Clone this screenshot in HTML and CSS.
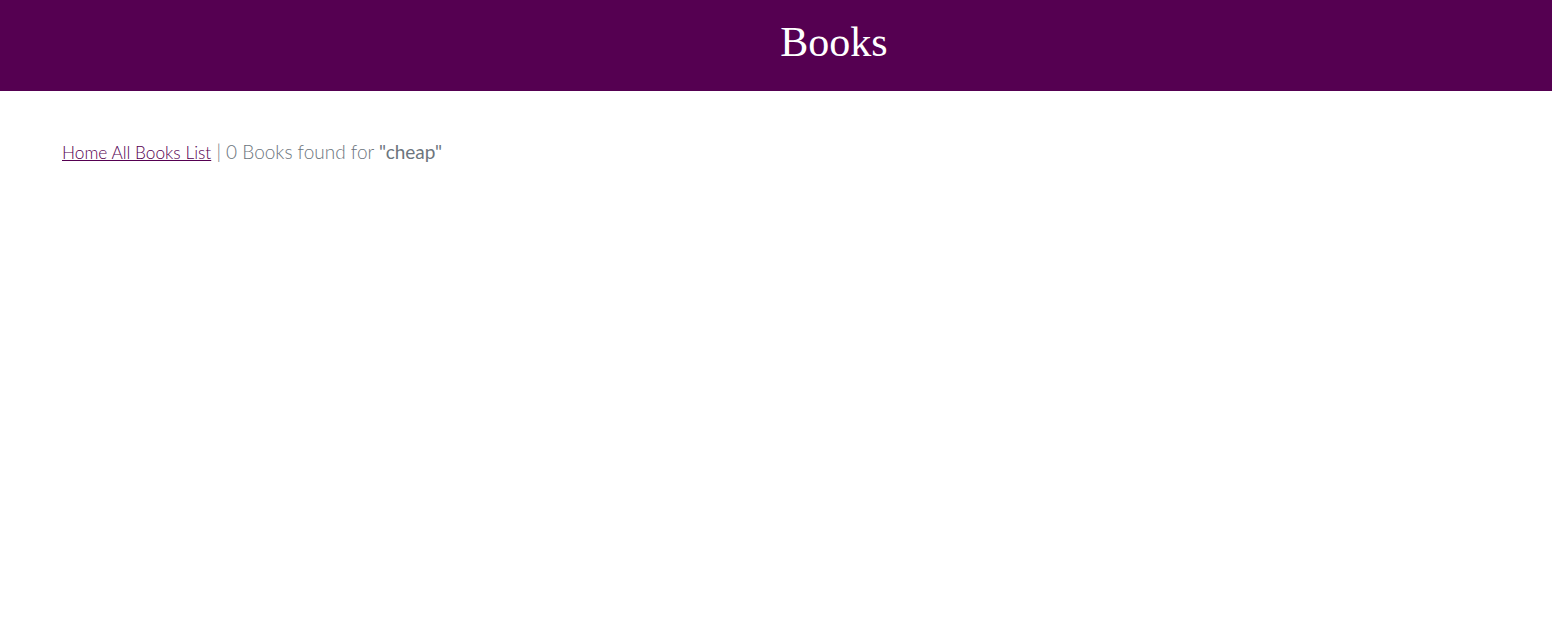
FILE: index.html
```html
<!DOCTYPE html>
<html>
<head>
<meta charset="utf-8">
<link rel="stylesheet" href="styles.css">
</head>
<body>
<header class="site-header">
  <h1 class="site-title">Books</h1>
</header>
<main class="content">
  <p class="crumbs"><a class="crumb-link" href="#">Home All Books List</a> | 0 Books found for <strong class="query">"cheap"</strong></p>
</main>
</body>
</html>
```
FILE: styles.css
```css
html, body {
  margin: 0;
  padding: 0;
  background: #fff;
}
body {
  font-family: Lato, "Open Sans", sans-serif;
}
.site-header {
  height: 91px;
  background: #550051;
  display: flex;
  justify-content: center;
  align-items: flex-start;
  padding-left: 116px;
  box-sizing: border-box;
}
.site-title {
  margin: 0;
  padding-top: 16px;
  font-family: "Liberation Serif", "DejaVu Serif", serif;
  font-weight: 400;
  font-size: 42px;
  line-height: 52px;
  color: #fff;
}
.content {
  padding: 49px 62px;
}
.crumbs {
  margin: 0;
  font-size: 19px;
  line-height: 24px;
  font-weight: 300;
  color: #6c757d;
}
.crumb-link {
  font-size: 17.3px;
  color: #550051;
  text-decoration: underline;
}
.query {
  font-weight: 400;
  color: #6c757d;
}
```
